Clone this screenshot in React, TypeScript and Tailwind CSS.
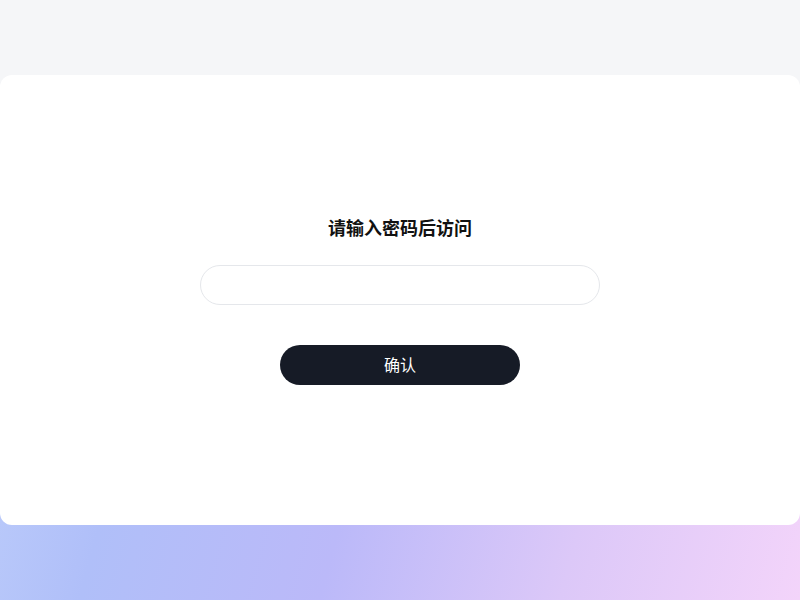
import { FormEvent, useState } from "react";

export default function App() {
	const [password, setPassword] = useState("");

	const onSubmit = (e: FormEvent<HTMLFormElement>) => {
		e.preventDefault();
	};

	return (
		<main
			className="relative min-h-screen w-full bg-[linear-gradient(105deg,#c3d4fb_0%,#b0bff9_25%,#bbb9f9_50%,#dcc8f8_75%,#f3d4fa_100%)]"
			style={{ fontFamily: '"Noto Sans", "Noto Sans CJK SC", sans-serif' }}
		>
			{/* gray backdrop behind the top of the card */}
			<div className="absolute inset-x-0 top-0 h-[300px] bg-[#f5f6f8]" />

			<div className="relative pt-[75px]">
				<form
					onSubmit={onSubmit}
					className="flex h-[450px] w-full flex-col items-center justify-center rounded-xl bg-white"
				>
					<h1 className="-mt-px text-lg font-bold leading-7 text-[#111111]">
						请输入密码后访问
					</h1>
					<input
						type="password"
						value={password}
						onChange={(e) => setPassword(e.target.value)}
						className="mt-[23px] h-10 w-[400px] rounded-full border border-[#e5e7eb] px-5 text-sm outline-none"
					/>
					<button
						type="submit"
						className="mt-10 h-10 w-[240px] rounded-full bg-[#161b26] text-base text-white"
					>
						确认
					</button>
				</form>
			</div>
		</main>
	);
}
